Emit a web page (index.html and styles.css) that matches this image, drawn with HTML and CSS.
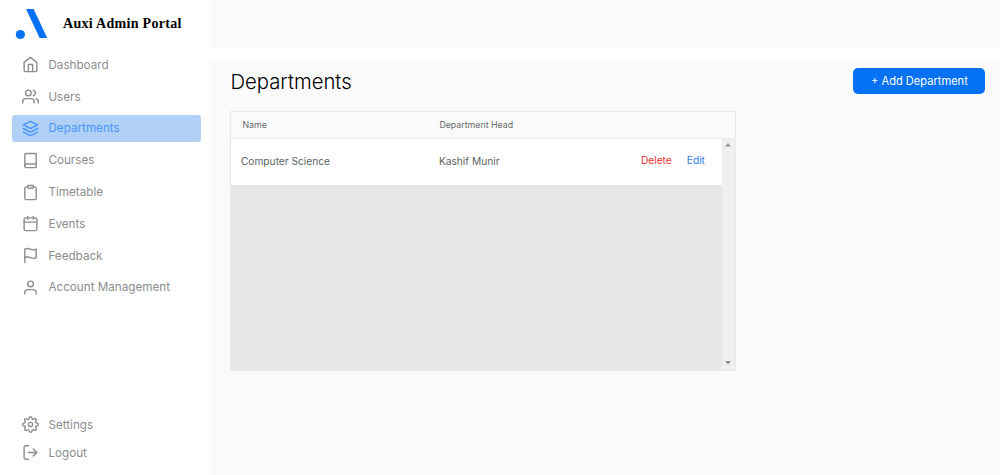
FILE: index.html
```html
<!DOCTYPE html>
<html lang="en">
<head>
<meta charset="utf-8">
<title>Auxi Admin Portal</title>
<link rel="stylesheet" href="styles.css">
</head>
<body>
<div class="app">
  <aside class="sidebar">
    <div class="brand">
      <svg class="logo" viewBox="0 0 32 30"><path d="M10 0H17.6L31.2 29H23.6Z"/><circle cx="4.4" cy="25.5" r="4.6"/></svg>
      <span class="brand-name">Auxi Admin Portal</span>
    </div>
    <nav class="nav">
      <a class="item"><svg class="icon" viewBox="0 0 24 24"><path d="M3 9l9-7 9 7v11a2 2 0 0 1-2 2H5a2 2 0 0 1-2-2z"/><path d="M9 22V12h6v10"/></svg><span>Dashboard</span></a>
      <a class="item"><svg class="icon" viewBox="0 0 24 24"><path d="M17 21v-2a4 4 0 0 0-4-4H5a4 4 0 0 0-4 4v2"/><circle cx="9" cy="7" r="4"/><path d="M23 21v-2a4 4 0 0 0-3-3.87M16 3.13a4 4 0 0 1 0 7.75"/></svg><span>Users</span></a>
      <a class="item active"><svg class="icon" viewBox="0 0 24 24"><path d="M12 2L2 7l10 5 10-5-10-5z"/><path d="M2 17l10 5 10-5M2 12l10 5 10-5"/></svg><span>Departments</span></a>
      <a class="item"><svg class="icon" viewBox="0 0 24 24"><path d="M4 19.500A2.500 2.500 0 0 1 6.500 17H20"/><path d="M6 2H20v20H6a2 2 0 0 1-2-2V4a2 2 0 0 1 2-2z"/></svg><span>Courses</span></a>
      <a class="item"><svg class="icon" viewBox="0 0 24 24"><path d="M16 4h2a2 2 0 0 1 2 2v14a2 2 0 0 1-2 2H6a2 2 0 0 1-2-2V6a2 2 0 0 1 2-2h2"/><rect x="8" y="2" width="8" height="4" rx="1"/></svg><span>Timetable</span></a>
      <a class="item"><svg class="icon" viewBox="0 0 24 24"><rect x="3" y="4" width="18" height="18" rx="2"/><path d="M16 2v4M8 2v4M3 10h18"/></svg><span>Events</span></a>
      <a class="item"><svg class="icon" viewBox="0 0 24 24"><path d="M4 15s1-1 4-1 5 2 8 2 4-1 4-1V3s-1 1-4 1-5-2-8-2-4 1-4 1zM4 22v-7"/></svg><span>Feedback</span></a>
      <a class="item"><svg class="icon" viewBox="0 0 24 24"><path d="M20 21v-2a4 4 0 0 0-4-4H8a4 4 0 0 0-4 4v2"/><circle cx="12" cy="7" r="4"/></svg><span>Account Management</span></a>
    </nav>
    <nav class="nav footer-nav">
      <a class="item"><svg class="icon" viewBox="0 0 24 24"><circle cx="12" cy="12" r="3"/><path d="M19.4 15a1.65 1.65 0 0 0 .33 1.82l.06.06a2 2 0 0 1 0 2.83 2 2 0 0 1-2.83 0l-.06-.06a1.65 1.65 0 0 0-1.82-.33 1.65 1.65 0 0 0-1 1.51V21a2 2 0 0 1-2 2 2 2 0 0 1-2-2v-.09A1.65 1.65 0 0 0 9 19.4a1.65 1.65 0 0 0-1.82.33l-.06.06a2 2 0 0 1-2.83 0 2 2 0 0 1 0-2.83l.06-.06a1.65 1.65 0 0 0 .33-1.82 1.65 1.65 0 0 0-1.51-1H3a2 2 0 0 1-2-2 2 2 0 0 1 2-2h.09A1.65 1.65 0 0 0 4.6 9a1.65 1.65 0 0 0-.33-1.82l-.06-.06a2 2 0 0 1 0-2.83 2 2 0 0 1 2.83 0l.06.06a1.65 1.65 0 0 0 1.82.33H9a1.65 1.65 0 0 0 1-1.51V3a2 2 0 0 1 2-2 2 2 0 0 1 2 2v.09a1.65 1.65 0 0 0 1 1.51 1.65 1.65 0 0 0 1.82-.33l.06-.06a2 2 0 0 1 2.83 0 2 2 0 0 1 0 2.83l-.06.06a1.65 1.65 0 0 0-.33 1.82V9a1.65 1.65 0 0 0 1.51 1H21a2 2 0 0 1 2 2 2 2 0 0 1-2 2h-.09a1.65 1.65 0 0 0-1.51 1z"/></svg><span>Settings</span></a>
      <a class="item"><svg class="icon" viewBox="0 0 24 24"><path d="M9 21.500H5a2 2 0 0 1-2-2v-15a2 2 0 0 1 2-2h4M16 17l5-5-5-5M21 12H9"/></svg><span>Logout</span></a>
    </nav>
  </aside>
  <div class="content">
    <header class="topbar"></header>
    <main class="main">
      <div class="heading">
        <h1 class="title">Departments</h1>
        <button class="add">+ Add Department</button>
      </div>
      <section class="table">
        <div class="thead"><span class="th">Name</span><span class="th">Department Head</span></div>
        <div class="tbody">
          <div class="rows">
            <div class="row">
              <span class="cell">Computer Science</span>
              <span class="cell">Kashif Munir</span>
              <span class="actions"><a class="delete">Delete</a><a class="edit">Edit</a></span>
            </div>
          </div>
          <div class="scrollbar">
            <svg class="arrow" viewBox="0 0 6 4"><path d="M3 0L6 3.500H0Z"/></svg>
            <svg class="arrow" viewBox="0 0 6 4"><path d="M0 0H6L3 3.500Z"/></svg>
          </div>
        </div>
      </section>
    </main>
  </div>
</div>
</body>
</html>
```
FILE: styles.css
```css
* { box-sizing: border-box; }
body { margin: 0; font-family: Inter, "Liberation Sans", sans-serif; background: #fff; }
.app { display: flex; width: 1000px; height: 475px; overflow: hidden; }
.sidebar { width: 209.4px; flex: none; display: flex; flex-direction: column; padding: 9px 9px 9px 12px; }
.brand { display: flex; height: 42.6px; padding-left: 3.5px; }
.logo { width: 32px; height: 30px; margin-right: 15.5px; fill: #0571f5; overflow: visible; }
.brand-name { font: bold 14px/29px "Liberation Serif", serif; color: #000; white-space: nowrap; letter-spacing: 0.3px; }
.nav { display: flex; flex-direction: column; gap: 5.3px; }
.footer-nav { margin-top: auto; gap: 1.5px; }
.item { display: flex; align-items: center; height: 26.5px; width: 188.5px; padding-left: 9.8px; border-radius: 3px; color: #8c8e90; font-size: 11.7px; white-space: nowrap; }
.item span { line-height: 16px; }
.active { background: #b0d0f6; color: #4898fb; }
.icon { width: 17px; height: 17px; margin-right: 9.6px; flex: none; fill: none; stroke: currentColor; stroke-width: 2; stroke-linecap: round; stroke-linejoin: round; overflow: visible; }
.content { flex: 1; display: flex; flex-direction: column; gap: 12px; }
.topbar { height: 48px; background: #fafafa; }
.main { flex: 1; background: #fafafa; padding: 8px 14.6px 0 21px; }
.heading { display: flex; justify-content: space-between; height: 43px; }
.title { margin: 0; font-size: 20.3px; line-height: 27px; font-weight: 350; color: #000; }
.add { width: 132px; height: 26px; padding: 0; border: 0; border-radius: 5px; background: #0571f5; color: #fff; font: 400 11.1px/26px Inter, sans-serif; }
.table { width: 505.5px; height: 259.5px; border: 1px solid #e9e9e9; display: flex; flex-direction: column; }
.thead { display: grid; grid-template-columns: 197px 1fr; height: 27px; padding-left: 11px; border-bottom: 1px solid #e9e9e9; color: #666a6e; font-size: 8.8px; line-height: 26px; }
.tbody { flex: 1; display: flex; }
.rows { flex: 1; background: #e7e7e7; }
.row { display: grid; grid-template-columns: 198px 202px 1fr; height: 46px; padding-left: 9.5px; background: #fff; font-size: 10.2px; line-height: 45px; color: #5b5f63; }
.actions { display: flex; gap: 15px; line-height: 43px; }
.delete { color: #ef3030; }
.edit { color: #3478f0; }
.scrollbar { width: 13px; display: flex; flex-direction: column; justify-content: space-between; align-items: center; padding: 4px 0 5px; background: #f0f0f0; }
.arrow { width: 6px; height: 4px; fill: #929292; }
```
